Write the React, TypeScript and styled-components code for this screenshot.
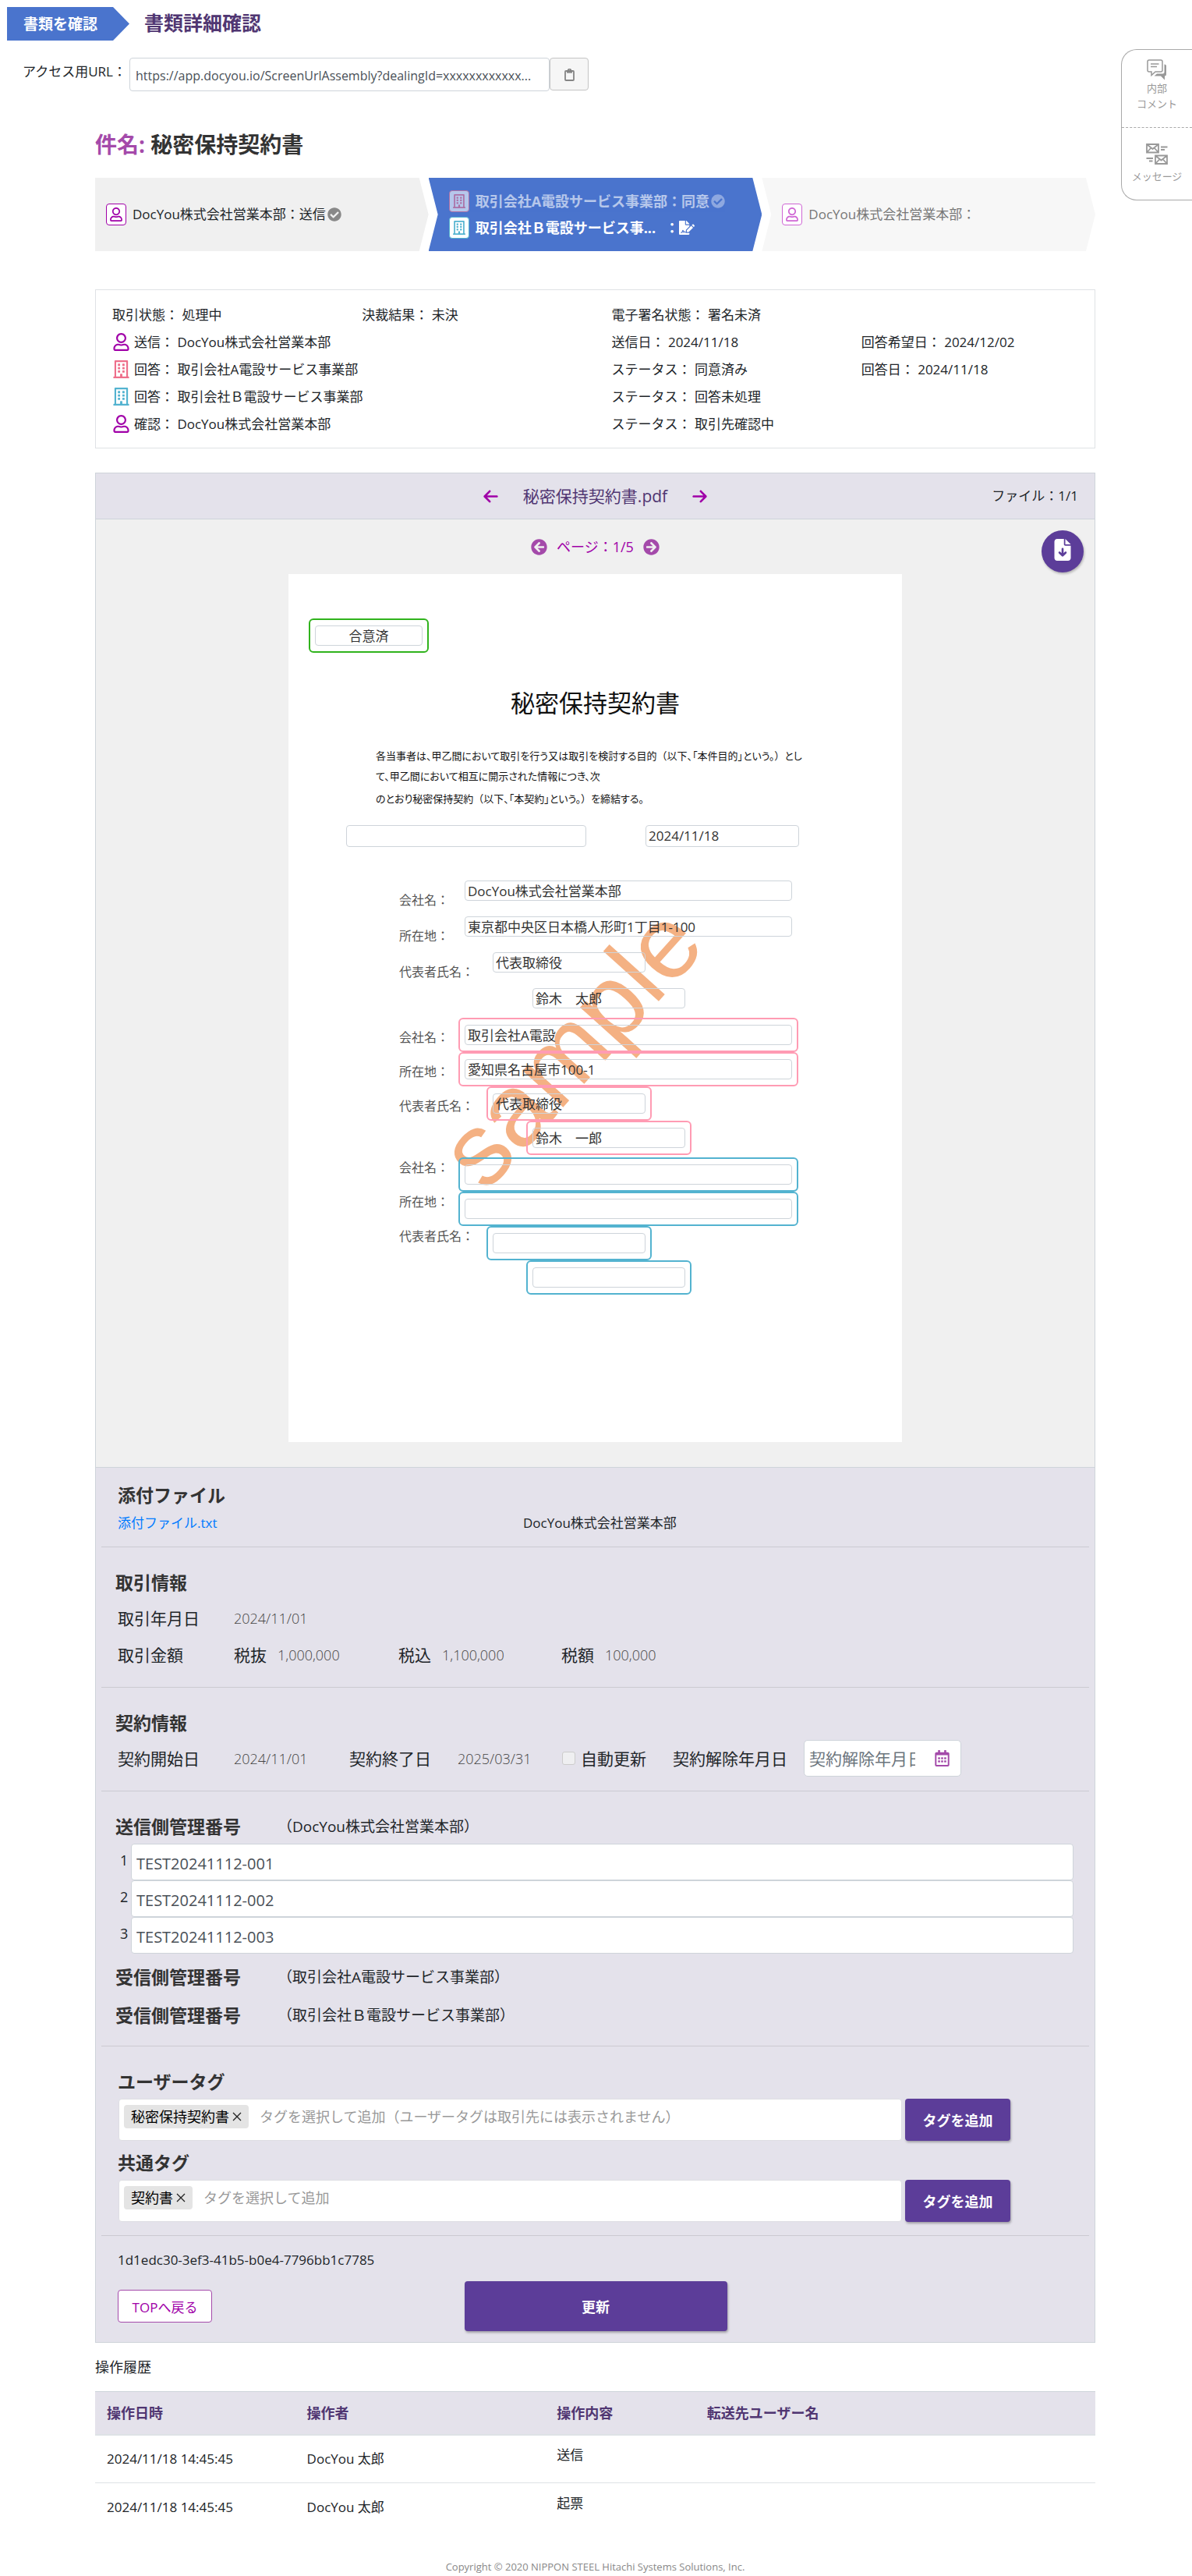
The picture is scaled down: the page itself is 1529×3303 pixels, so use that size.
import React from 'react';
import styled, { createGlobalStyle, css } from 'styled-components';
import { FaRegUser, FaRegBuilding, FaCheckCircle, FaArrowCircleLeft, FaArrowCircleRight, FaRegCalendarAlt, FaFileSignature } from 'react-icons/fa';
import { FaArrowLeft, FaArrowRight, FaFileArrowDown } from 'react-icons/fa6';

const color = {
  ink: '#212529',
  heading: '#333333',
  blue: '#4a74cd',
  purple: '#5c3d99',
  deep: '#503672',
  magenta: '#a000a8',
  orchid: '#a44aaa',
  lavender: '#e4e2eb',
  grey: '#f0f0f0',
  line: '#ced4da',
  rule: '#cbcad1',
  pink: '#ff9bb3',
  rose: '#ee6f8b',
  cyan: '#53b3d0',
  green: '#30b31c',
};

const GlobalStyle = createGlobalStyle`
  *, *::before, *::after { box-sizing: border-box; }
  body {
    margin: 0;
    background: #fff;
    color: ${color.ink};
    font-family: "Open Sans", "Noto Sans CJK JP", sans-serif;
    font-size: 17px;
    line-height: 26px;
  }
  h1, h2, h3, p { margin: 0; }
  button, input { font-family: inherit; }
  button { cursor: pointer; }
  svg { display: block; flex: none; }
`;

/* ---------- top of the page ---------- */

const TopBar = styled.header`
  display: flex;
  gap: 19px;
  padding: 9px 0 0 9px;
`;

const Crumb = styled.div`
  width: 157px;
  height: 43px;
  padding: 2px 0 0 21px;
  background: ${color.blue};
  clip-path: polygon(0 0, 136px 0, 100% 50%, 136px 100%, 0 100%);
  color: #fff;
  font-size: 19px;
  font-weight: 700;
  line-height: 41px;
  white-space: nowrap;
`;

const ScreenTitle = styled.h1`
  color: ${color.deep};
  font-size: 25px;
  font-weight: 700;
  line-height: 40px;
`;

const UrlRow = styled.div`
  display: flex;
  margin: 22px 0 0 29px;

  label {
    width: 137px;
    font-size: 17px;
    line-height: 36px;
    white-space: nowrap;
  }
`;

const UrlInput = styled.input`
  width: 539px;
  height: 43px;
  padding: 2px 7px 0;
  border: 1px solid ${color.line};
  border-radius: 4px;
  background: #fff;
  color: #495057;
  font-size: 16px;
`;

const CopyButton = styled.button`
  display: grid;
  place-items: center;
  width: 50px;
  height: 42px;
  padding: 2px 0 0;
  border: 1px solid #c4c4c4;
  border-radius: 4px;
  background: #f6f6f6;
  color: #858585;
`;

const SidePanel = styled.aside`
  position: absolute;
  top: 63px;
  right: 0;
  width: 91px;
  border: 1px solid #a9a9a9;
  border-right: 0;
  border-radius: 20px 0 0 20px;
  background: #fff;
`;

const SideButton = styled.button`
  display: flex;
  flex-direction: column;
  align-items: center;
  width: 100%;
  height: 99px;
  padding: 12px 0 0;
  border: 0;
  background: none;
  color: #999;
  font-size: 13px;
  line-height: 20px;

  & + & {
    height: 93px;
    padding-top: 20px;
    gap: 5px;
    border-top: 1px dashed #aaa;
  }
`;

const Main = styled.main`
  padding: 0 124px 0 122px;
`;

const Subject = styled.h2`
  margin: 48px 0 23px;
  color: ${color.heading};
  font-size: 28px;
  font-weight: 700;
  line-height: 40px;

  span { color: ${color.orchid}; }
`;

/* ---------- progress steps ---------- */

const Steps = styled.ol`
  display: grid;
  grid-template-columns: repeat(3, 1fr);
  margin: 0;
  padding: 0;
  list-style: none;
`;

const Step = styled.li<{ $active?: boolean; $first?: boolean; $faded?: boolean }>`
  display: flex;
  flex-direction: column;
  justify-content: center;
  gap: 6px;
  height: 94px;
  padding-left: ${p => (p.$first ? 14 : 26)}px;
  background: ${p => (p.$active ? color.blue : p.$faded ? '#f7f7f7' : color.grey)};
  color: ${p => (p.$active ? '#fff' : p.$faded ? '#777' : color.ink)};
  font-size: ${p => (p.$active ? 18 : 17)}px;
  font-weight: ${p => (p.$active ? 700 : 400)};
  clip-path: ${p =>
    p.$first
      ? 'polygon(0 0, calc(100% - 12px) 0, 100% 50%, calc(100% - 12px) 100%, 0 100%)'
      : 'polygon(0 0, calc(100% - 12px) 0, 100% 50%, calc(100% - 12px) 100%, 0 100%, 12px 50%)'};
`;

const StepLine = styled.div<{ $dim?: boolean }>`
  display: flex;
  align-items: center;
  opacity: ${p => (p.$dim ? 0.6 : 1)};
  line-height: 28px;
  white-space: nowrap;
`;

const IconBox = styled.span<{ $tone: string }>`
  display: grid;
  place-items: center;
  width: 26px;
  height: 28px;
  margin-right: 8px;
  border: 1px solid ${p => p.$tone};
  border-radius: 4px;
  background: #fff;
  color: ${p => p.$tone};
`;

const StepStatus = styled.span`
  margin-left: 12px;
`;

const Tick = styled.span`
  margin-left: 2px;
  color: #888;

  ${Step}:nth-child(2) & { color: #bccbed; }
`;

/* ---------- deal summary ---------- */

const Summary = styled.section`
  margin-top: 49px;
  padding: 14px 0 13px;
  border: 1px solid #dfe2e5;
`;

const SummaryRow = styled.div`
  display: grid;
  grid-template-columns: repeat(4, 1fr);
`;

const SummaryCell = styled.div<{ $column?: number; $span?: number }>`
  display: flex;
  align-items: center;
  gap: 8px;
  grid-column: ${p => p.$column ?? 'auto'} / span ${p => p.$span ?? 1};
  height: 35px;
  padding-left: 21px;
  white-space: pre;
`;

const PartyIcon = styled.span<{ $tone: string }>`
  width: 20px;
  color: ${p => p.$tone};
`;

/* ---------- document viewer ---------- */

const Viewer = styled.section`
  margin-top: 31px;
  border: 1px solid ${color.line};
  background: ${color.lavender};
`;

const ViewerHead = styled.div`
  display: grid;
  grid-template-columns: 1fr auto 1fr;
  align-items: center;
  height: 59px;
  padding-right: 21px;
  padding-left: 21px;
  border-bottom: 1px solid ${color.line};
`;

const FilePicker = styled.div`
  display: flex;
  grid-column: 2;
  align-items: center;
  gap: 31px;
  color: ${color.deep};
  font-size: 21px;
`;

const IconButton = styled.button`
  padding: 0;
  border: 0;
  background: none;
  color: ${color.magenta};
`;

const RoundIconButton = styled(IconButton)`
  color: ${color.orchid};
`;

const FileCount = styled.span`
  justify-self: end;
`;

const ViewerBody = styled.div`
  padding-bottom: 32px;
  border-bottom: 1px solid ${color.line};
  background: ${color.grey};
`;

const PageBar = styled.div`
  display: grid;
  grid-template-columns: 1fr auto 1fr;
  align-items: center;
  height: 70px;
  padding: 0 14px;
`;

const PagePicker = styled.div`
  display: flex;
  grid-column: 2;
  align-items: center;
  gap: 12px;
  color: ${color.magenta};
  font-size: 18px;
`;

const DownloadButton = styled.button`
  display: grid;
  place-items: center;
  justify-self: end;
  width: 54px;
  height: 54px;
  margin-top: 12px;
  padding: 0 0 4px;
  border: 0;
  border-radius: 50%;
  background: ${color.purple};
  box-shadow: 1px 2px 3px rgba(0, 0, 0, 0.25);
  color: #fff;
`;

const Sheet = styled.article`
  position: relative;
  z-index: 0;
  max-width: 787px;
  aspect-ratio: 787 / 1113;
  margin: 0 auto;
  padding-top: 57px;
  overflow: hidden;
  background: #fff;
  color: #111;
`;

const Watermark = styled.div`
  position: absolute;
  top: 606px;
  left: 362px;
  z-index: -1;
  transform: translate(-50%, -50%) rotate(-48deg);
  color: #f4b183;
  font-family: "Liberation Sans", sans-serif;
  font-size: 132px;
  line-height: 132px;
`;

const tones = { none: 'transparent', green: color.green, pink: color.pink, cyan: color.cyan };
type Tone = keyof typeof tones;

const Frame = styled.div<{ $tone: Tone; $width: number; $indent: number }>`
  flex: none;
  width: ${p => p.$width}px;
  margin-left: ${p => p.$indent}px;
  padding: 7px 6px;
  border: 2px solid ${p => tones[p.$tone]};
  border-radius: 6px;
`;

const SheetInput = styled.input<{ $center?: boolean; $width?: number }>`
  display: block;
  width: ${p => (p.$width ? `${p.$width}px` : '100%')};
  height: 26px;
  padding: 0 3px 2px;
  border: 1px solid ${color.line};
  border-radius: 4px;
  background: transparent;
  color: #333;
  font-size: 17px;
  text-align: ${p => (p.$center ? 'center' : 'left')};
`;

const SheetTitle = styled.h3`
  margin-top: 40px;
  font-size: 31px;
  font-weight: 400;
  line-height: 48px;
  text-align: center;
`;

const Clause = styled.p<{ $gap: number }>`
  margin: ${p => p.$gap}px 0 0 112px;
  font-family: "Noto Sans CJK JP", sans-serif;
  font-size: 13px;
  font-feature-settings: "palt";
  line-height: 26px;
  white-space: nowrap;

  span { font-feature-settings: normal; }
`;

const SheetDates = styled.div`
  display: flex;
  gap: 76px;
  margin: 21px 0 34px 74px;

  ${SheetInput} { height: 28px; }
`;

const Party = styled.div<{ $gap: number; $labelTop: number }>`
  display: flex;
  flex-direction: column;
  gap: ${p => p.$gap}px;
  padding: 0 0 3px 142px;

  label {
    width: 76px;
    padding-top: ${p => p.$labelTop}px;
    color: #555;
    font-size: 16px;
    line-height: 20px;
    white-space: nowrap;
  }
`;

const PartyRow = styled.div`
  display: flex;
  height: 44px;
`;

/* ---------- form sections below the sheet ---------- */

const Section = styled.section<{ $top?: number; $bottom?: number; $left?: number }>`
  margin: 0 7px;
  padding: ${p => p.$top ?? 28}px 20px ${p => p.$bottom ?? 18}px ${p => p.$left ?? 21}px;

  & + & { border-top: 1px solid ${color.rule}; }
`;

const SectionTitle = styled.h3`
  display: block;
  color: ${color.heading};
  font-size: 23px;
  font-weight: 700;
  line-height: 34px;
`;

const AttachmentRow = styled.div`
  display: grid;
  grid-template-columns: 520px 1fr;
  margin-top: 6px;

  a { color: #007bff; text-decoration: none; }
`;

const FieldRow = styled.div<{ $columns: string }>`
  display: grid;
  grid-template-columns: ${p => p.$columns};
  align-items: center;
  height: 47px;
  font-size: 21px;
  white-space: nowrap;
`;

const FieldRows = styled.div`
  margin: 5px 0 0 3px;
`;

const Value = styled.span`
  color: #444;
  font-size: 18px;
  font-weight: 300;
`;

const Amount = styled.span`
  display: flex;
  align-items: center;
  gap: 14px;
`;

const CheckLabel = styled.label`
  display: flex;
  align-items: center;
  gap: 7px;
`;

const CheckBox = styled.input`
  width: 17px;
  height: 17px;
  margin: 0;
  border: 1px solid #ccc;
  border-radius: 3px;
  background: #efeff1;
  appearance: none;
`;

const DateBox = styled.div`
  display: flex;
  align-items: center;
  width: 202px;
  height: 47px;
  padding: 0 13px 0 6px;
  border: 1px solid ${color.line};
  border-radius: 5px;
  background: #fff;

  input {
    flex: 1;
    min-width: 0;
    margin-right: 24px;
    padding: 0;
    border: 0;
    background: none;
    font-size: 21px;
  }
  input::placeholder { color: #6c757d; opacity: 1; }
`;

const ManageHead = styled.div<{ $top?: number }>`
  display: grid;
  grid-template-columns: 208px 1fr;
  align-items: center;
  margin-top: ${p => p.$top ?? 0}px;
  font-size: 19px;
`;

const NumberList = styled.div`
  margin: 5px 0 0 6px;
`;

const NumberRow = styled.div`
  display: grid;
  grid-template-columns: 14px 1fr;

  label {
    padding-top: 8px;
    font-size: 18px;
  }
`;

const NumberInput = styled.input`
  height: 47px;
  padding: 4px 6px 0;
  border: 1px solid ${color.line};
  border-radius: 4px;
  background: #fff;
  color: #495057;
  font-size: 20px;
`;

const TagRow = styled.div`
  display: grid;
  grid-template-columns: minmax(0, 1fr) 135px;
  gap: 4px;
  margin: 5px 81px 11px 1px;

  &:last-child { margin-bottom: 0; }
`;

const TagBox = styled.div`
  display: flex;
  gap: 14px;
  height: 54px;
  padding: 7px 6px;
  border: 1px solid #dedee3;
  border-radius: 4px;
  background: #fff;

  input {
    flex: 1;
    height: 30px;
    padding: 0;
    border: 0;
    background: none;
    font-size: 18px;
  }
  input::placeholder { color: #999; opacity: 1; }
`;

const Tag = styled.span`
  display: flex;
  align-items: center;
  gap: 4px;
  height: 30px;
  padding: 0 9px;
  border-radius: 4px;
  background: #e4e4e4;
  color: #000;
  font-size: 18px;
  white-space: nowrap;

  button {
    padding: 0;
    border: 0;
    background: none;
    color: #222;
  }
`;

const solid = css`
  border: 0;
  border-radius: 4px;
  background: ${color.purple};
  box-shadow: 1px 2px 3px rgba(0, 0, 0, 0.3);
  color: #fff;
  font-size: 18px;
  font-weight: 700;
`;

const AddButton = styled.button`
  ${solid}
  height: 54px;
`;

const UpdateButton = styled.button`
  ${solid}
  width: 337px;
  height: 64px;
`;

const ActionRow = styled.div`
  display: grid;
  grid-template-columns: 1fr auto 1fr;
  align-items: center;
  margin-top: 14px;
`;

const BackButton = styled.button`
  justify-self: start;
  width: 121px;
  height: 42px;
  padding: 0;
  border: 1px solid ${color.orchid};
  border-radius: 4px;
  background: #fff;
  color: ${color.magenta};
  font-size: 17px;
`;

/* ---------- history ---------- */

const HistoryTitle = styled.h3`
  margin: 18px 0;
  font-size: 18px;
  font-weight: 400;
`;

const HistoryTable = styled.table`
  width: 100%;
  border-collapse: collapse;
  table-layout: fixed;

  th, td {
    padding: 0 15px;
    text-align: left;
  }
  th {
    height: 55px;
    border-top: 1px solid ${color.line};
    border-bottom: 2px solid #dee2e6;
    background: ${color.lavender};
    color: ${color.deep};
    font-size: 18px;
    font-weight: 700;
  }
  td { height: 62px; }
  td:nth-child(3) { padding-bottom: 10px; }
  tbody tr + tr td { border-top: 1px solid #dee2e6; }
  th:nth-child(1) { width: 20%; }
  th:nth-child(2) { width: 25%; }
  th:nth-child(3) { width: 15%; }
`;

const Footer = styled.footer`
  margin-top: 35px;
  color: #888;
  font-size: 13px;
  line-height: 20px;
  text-align: center;
`;

/* ---------- drawings ---------- */

const ClipboardIcon = () => (
  <svg width="13" height="16" viewBox="0 0 13 16" fill="none" stroke="currentColor" strokeWidth="1.8">
    <rect x="1" y="3" width="11" height="12" rx="1" />
    <path d="M3 3h7v2.6H3z" fill="currentColor" stroke="none" />
    <path d="M4.6 3.4V2.6a1.9 1.9 0 0 1 3.8 0v.8" />
  </svg>
);

const ChatIcon = () => (
  <svg width="26" height="27" viewBox="0 0 26 27" fill="none" stroke="currentColor" strokeWidth="1.5">
    <path d="M3 1h15a2 2 0 0 1 2 2v11a2 2 0 0 1-2 2h-7l-5 4.5V16H3a2 2 0 0 1-2-2V3a2 2 0 0 1 2-2z" />
    <path d="M5 6h10.500M5 9.500h8" />
    <path d="M22.500 6.500c2 .2 2.500 1 2.500 2.500v10c0 1.800-.8 2.500-2 2.500v5l-5-5H9.500l3.500-3h7.500c1.300 0 2-.7 2-2z" fill="currentColor" stroke="none" />
  </svg>
);

const MailIcon = () => (
  <svg width="28" height="27" viewBox="0 0 28 27" fill="none" stroke="currentColor" strokeWidth="1.8">
    <path d="M1 1h15v10.500H1zM1 1l7.500 6L16 1M1 11.500l5.500-6M16 11.500l-5.500-6" />
    <path d="M12 15.500h15V26H12zM12 15.500l7.500 6 7.500-6M12 26l5.500-6M27 26l-5.500-6" />
    <path d="M19 4.500h8.500M19 8h5M.5 19H9M4 22.500h4.500" />
  </svg>
);

const CloseIcon = () => (
  <svg width="12" height="12" viewBox="0 0 12 12" stroke="currentColor" strokeWidth="1.3">
    <path d="M1 1l10 10M11 1L1 11" />
  </svg>
);

/* ---------- data ---------- */

type Row = { label?: string; value?: string; short?: boolean; indent?: number };

const parties: { name: string; tone: Tone; gap: number; labelTop: number; rows: Row[] }[] = [
  {
    name: 'sender', tone: 'none', gap: 2, labelTop: 24,
    rows: [
      { label: '会社名：', value: 'DocYou株式会社営業本部' },
      { label: '所在地：', value: '東京都中央区日本橋人形町1丁目1-100' },
      { label: '代表者氏名：', value: '代表取締役', short: true, indent: 36 },
      { value: '鈴木　太郎', short: true, indent: 87 },
    ],
  },
  {
    name: 'a', tone: 'pink', gap: 0, labelTop: 15,
    rows: [
      { label: '会社名：', value: '取引会社A電設' },
      { label: '所在地：', value: '愛知県名古屋市100-1' },
      { label: '代表者氏名：', value: '代表取締役', short: true, indent: 36 },
      { value: '鈴木　一郎', short: true, indent: 87 },
    ],
  },
  {
    name: 'b', tone: 'cyan', gap: 0, labelTop: 3,
    rows: [
      { label: '会社名：', value: '' },
      { label: '所在地：', value: '' },
      { label: '代表者氏名：', value: '', short: true, indent: 36 },
      { value: '', short: true, indent: 87 },
    ],
  },
];

const summary = [
  { icon: 'user', tone: color.magenta, text: '送信： DocYou株式会社営業本部', status: '送信日： 2024/11/18', date: '回答希望日： 2024/12/02' },
  { icon: 'building', tone: color.rose, text: '回答： 取引会社A電設サービス事業部', status: 'ステータス： 同意済み', date: '回答日： 2024/11/18' },
  { icon: 'building', tone: color.cyan, text: '回答： 取引会社Ｂ電設サービス事業部', status: 'ステータス： 回答未処理' },
  { icon: 'user', tone: color.magenta, text: '確認： DocYou株式会社営業本部', status: 'ステータス： 取引先確認中' },
];

const numbers = ['TEST20241112-001', 'TEST20241112-002', 'TEST20241112-003'];

const history = [
  { at: '2024/11/18 14:45:45', by: 'DocYou 太郎', action: '送信' },
  { at: '2024/11/18 14:45:45', by: 'DocYou 太郎', action: '起票' },
];

const tagFields = [
  { id: 'user-tag', title: 'ユーザータグ', tag: '秘密保持契約書', hint: 'タグを選択して追加（ユーザータグは取引先には表示されません）' },
  { id: 'common-tag', title: '共通タグ', tag: '契約書', hint: 'タグを選択して追加' },
];

export default function App() {
  return (
    <>
      <GlobalStyle />
      <TopBar>
        <Crumb>書類を確認</Crumb>
        <ScreenTitle>書類詳細確認</ScreenTitle>
      </TopBar>
      <UrlRow>
        <label htmlFor="url">アクセス用URL：</label>
        <UrlInput id="url" readOnly value="https://app.docyou.io/ScreenUrlAssembly?dealingId=xxxxxxxxxxxx..." />
        <CopyButton type="button" aria-label="コピー"><ClipboardIcon /></CopyButton>
      </UrlRow>
      <SidePanel>
        <SideButton type="button"><ChatIcon /><span>内部<br />コメント</span></SideButton>
        <SideButton type="button"><MailIcon /><span>メッセージ</span></SideButton>
      </SidePanel>

      <Main>
        <Subject><span>件名:</span> 秘密保持契約書</Subject>

        <Steps>
          <Step $first>
            <StepLine>
              <IconBox $tone={color.magenta}><FaRegUser size={18} /></IconBox>
              DocYou株式会社営業本部：送信
              <Tick><FaCheckCircle size={18} /></Tick>
            </StepLine>
          </Step>
          <Step $active>
            <StepLine $dim>
              <IconBox $tone={color.rose}><FaRegBuilding size={18} /></IconBox>
              取引会社A電設サービス事業部：同意
              <Tick><FaCheckCircle size={18} /></Tick>
            </StepLine>
            <StepLine>
              <IconBox $tone={color.cyan}><FaRegBuilding size={18} /></IconBox>
              取引会社Ｂ電設サービス事...
              <StepStatus>：</StepStatus>
              <FaFileSignature size={20} />
            </StepLine>
          </Step>
          <Step $faded>
            <StepLine>
              <IconBox $tone="#cf66d4"><FaRegUser size={18} /></IconBox>
              DocYou株式会社営業本部：
            </StepLine>
          </Step>
        </Steps>

        <Summary>
          <SummaryRow>
            <SummaryCell>取引状態： 処理中</SummaryCell>
            <SummaryCell>決裁結果： 未決</SummaryCell>
            <SummaryCell>電子署名状態： 署名未済</SummaryCell>
          </SummaryRow>
          {summary.map(row => (
            <SummaryRow key={row.text}>
              <SummaryCell $span={2}>
                <PartyIcon $tone={row.tone}>
                  {row.icon === 'user' ? <FaRegUser size={23} /> : <FaRegBuilding size={23} />}
                </PartyIcon>
                {row.text}
              </SummaryCell>
              <SummaryCell $column={3}>{row.status}</SummaryCell>
              {row.date && <SummaryCell>{row.date}</SummaryCell>}
            </SummaryRow>
          ))}
        </Summary>

        <Viewer>
          <ViewerHead>
            <FilePicker>
              <IconButton type="button" aria-label="前のファイル"><FaArrowLeft size={21} /></IconButton>
              秘密保持契約書.pdf
              <IconButton type="button" aria-label="次のファイル"><FaArrowRight size={21} /></IconButton>
            </FilePicker>
            <FileCount>ファイル：1/1</FileCount>
          </ViewerHead>

          <ViewerBody>
            <PageBar>
              <PagePicker>
                <RoundIconButton type="button" aria-label="前のページ"><FaArrowCircleLeft size={21} /></RoundIconButton>
                ページ：1/5
                <RoundIconButton type="button" aria-label="次のページ"><FaArrowCircleRight size={21} /></RoundIconButton>
              </PagePicker>
              <DownloadButton type="button" aria-label="ダウンロード"><FaFileArrowDown size={28} /></DownloadButton>
            </PageBar>

            <Sheet>
              <Watermark>sample</Watermark>
              <Frame $tone="green" $width={154} $indent={26}>
                <SheetInput $center aria-label="合意" readOnly value="合意済" />
              </Frame>
              <SheetTitle>秘密保持契約書</SheetTitle>
              <Clause $gap={31}>
                各当事者は、甲乙間において取引を行う又は取引を検討する目的<span>（</span>以下、「本件目的」という。<span>）</span>とし
                <br />
                て、甲乙間において相互に開示された情報につき、次
              </Clause>
              <Clause $gap={3}>のとおり秘密保持契約<span>（</span>以下、「本契約」という。<span>）</span>を締結する。</Clause>
              <SheetDates>
                <SheetInput $width={308} aria-label="契約番号" readOnly value="" />
                <SheetInput $width={197} aria-label="契約日" readOnly value="2024/11/18" />
              </SheetDates>
              {parties.map(party => (
                <Party key={party.name} $gap={party.gap} $labelTop={party.labelTop}>
                  {party.rows.map((row, i) => (
                    <PartyRow key={i}>
                      <label htmlFor={`${party.name}-${i}`}>{row.label}</label>
                      <Frame $tone={party.tone} $width={row.short ? 212 : 436} $indent={row.indent ?? 0}>
                        <SheetInput id={`${party.name}-${i}`} readOnly value={row.value} />
                      </Frame>
                    </PartyRow>
                  ))}
                </Party>
              ))}
            </Sheet>
          </ViewerBody>

          <Section $top={18} $bottom={17}>
            <SectionTitle>添付ファイル</SectionTitle>
            <AttachmentRow>
              <a href="#attachment">添付ファイル.txt</a>
              <span>DocYou株式会社営業本部</span>
            </AttachmentRow>
          </Section>

          <Section $left={18}>
            <SectionTitle>取引情報</SectionTitle>
            <FieldRows>
              <FieldRow $columns="149px 211px 209px 1fr">
                <span>取引年月日</span>
                <Value>2024/11/01</Value>
              </FieldRow>
              <FieldRow $columns="149px 211px 209px 1fr">
                <span>取引金額</span>
                <Amount>税抜<Value>1,000,000</Value></Amount>
                <Amount>税込<Value>1,100,000</Value></Amount>
                <Amount>税額<Value>100,000</Value></Amount>
              </FieldRow>
            </FieldRows>
          </Section>

          <Section $left={18}>
            <SectionTitle>契約情報</SectionTitle>
            <FieldRows>
              <FieldRow $columns="149px 148px 139px 134px 142px 168px 1fr">
                <span>契約開始日</span>
                <Value>2024/11/01</Value>
                <span>契約終了日</span>
                <Value>2025/03/31</Value>
                <CheckLabel><CheckBox type="checkbox" disabled />自動更新</CheckLabel>
                <label htmlFor="cancel-date">契約解除年月日</label>
                <DateBox>
                  <input id="cancel-date" placeholder="契約解除年月日" />
                  <RoundIconButton type="button" aria-label="カレンダー"><FaRegCalendarAlt size={21} /></RoundIconButton>
                </DateBox>
              </FieldRow>
            </FieldRows>
          </Section>

          <Section $top={28} $bottom={22} $left={18}>
            <ManageHead><SectionTitle>送信側管理番号</SectionTitle>（DocYou株式会社営業本部）</ManageHead>
            <NumberList>
              {numbers.map((n, i) => (
                <NumberRow key={n}>
                  <label htmlFor={`number-${i}`}>{i + 1}</label>
                  <NumberInput id={`number-${i}`} defaultValue={n} />
                </NumberRow>
              ))}
            </NumberList>
            <ManageHead $top={13}><SectionTitle>受信側管理番号</SectionTitle>（取引会社A電設サービス事業部）</ManageHead>
            <ManageHead $top={15}><SectionTitle>受信側管理番号</SectionTitle>（取引会社Ｂ電設サービス事業部）</ManageHead>
          </Section>

          <Section $bottom={17}>
            {tagFields.map(field => (
              <React.Fragment key={field.id}>
                <SectionTitle as="label" htmlFor={field.id}>{field.title}</SectionTitle>
                <TagRow>
                  <TagBox>
                    <Tag>{field.tag}<button type="button" aria-label="削除"><CloseIcon /></button></Tag>
                    <input id={field.id} placeholder={field.hint} />
                  </TagBox>
                  <AddButton type="button">タグを追加</AddButton>
                </TagRow>
              </React.Fragment>
            ))}
          </Section>

          <Section $top={18} $bottom={14}>
            <p>1d1edc30-3ef3-41b5-b0e4-7796bb1c7785</p>
            <ActionRow>
              <BackButton type="button">TOPへ戻る</BackButton>
              <UpdateButton type="button">更新</UpdateButton>
            </ActionRow>
          </Section>
        </Viewer>

        <HistoryTitle>操作履歴</HistoryTitle>
        <HistoryTable>
          <thead>
            <tr><th>操作日時</th><th>操作者</th><th>操作内容</th><th>転送先ユーザー名</th></tr>
          </thead>
          <tbody>
            {history.map(h => (
              <tr key={h.action}><td>{h.at}</td><td>{h.by}</td><td>{h.action}</td><td /></tr>
            ))}
          </tbody>
        </HistoryTable>
        <Footer>Copyright © 2020 NIPPON STEEL Hitachi Systems Solutions, Inc.</Footer>
      </Main>
    </>
  );
}
